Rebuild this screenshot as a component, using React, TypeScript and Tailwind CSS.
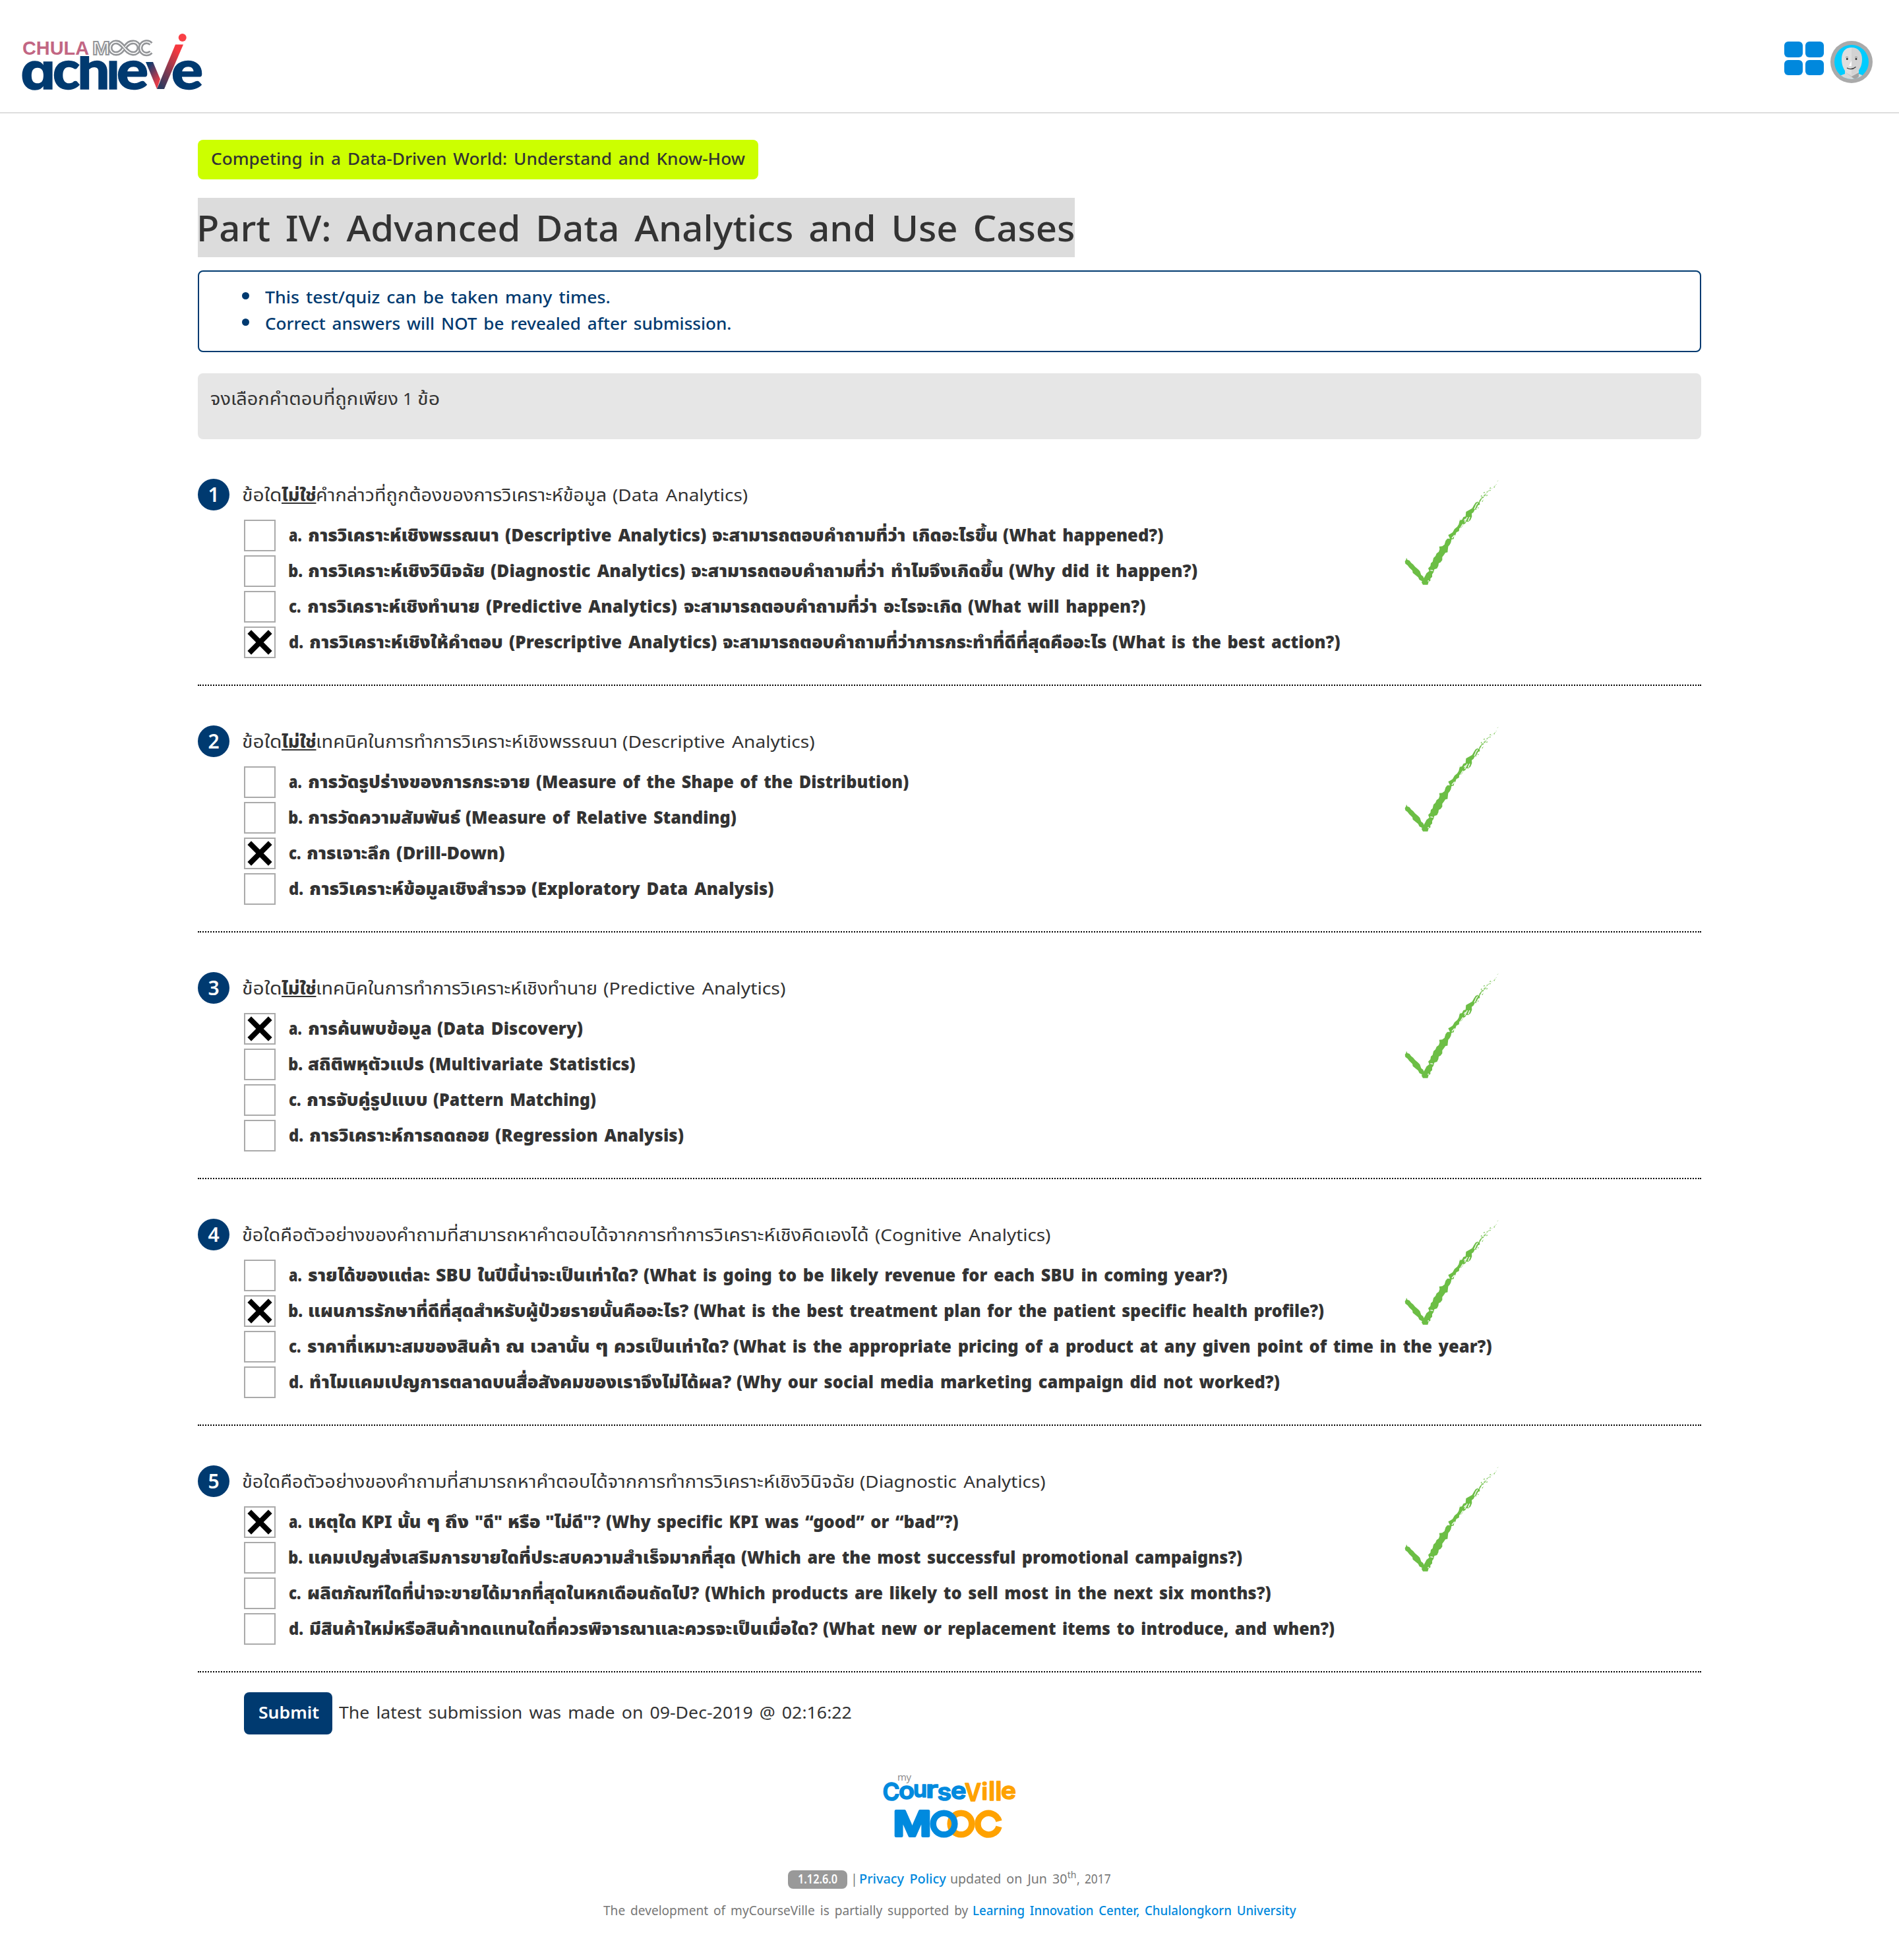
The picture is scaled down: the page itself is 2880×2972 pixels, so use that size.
import { useLayoutEffect, useRef } from "react";

type Run = [text: string, start: number, end: number, kind?: "u"];

type Question = {
  prompt: Run[];
  options: Run[][];
  chosen: number;
};

/** Inline text stretched horizontally to a fixed measure. */
function Fit({
  text,
  w,
  className = "",
  inner = "",
}: {
  text: string;
  w: number;
  className?: string;
  inner?: string;
}) {
  const ref = useRef<HTMLSpanElement>(null);
  useLayoutEffect(() => {
    const el = ref.current;
    if (!el) return;
    const natural = el.offsetWidth;
    if (natural > 0) el.style.transform = `scaleX(${w / natural})`;
  }, [text, w]);
  return (
    <span className={`block shrink-0 ${className}`} style={{ width: w }}>
      <span ref={ref} className={`inline-block origin-left whitespace-pre [word-spacing:3px] ${inner}`}>
        {text}
      </span>
    </span>
  );
}

function Line({ runs, from, className = "" }: { runs: Run[]; from: number; className?: string }) {
  return (
    <div className={`flex ${className}`}>
      {runs.map(([text, start, end, kind], i) => {
        const prev = i === 0 ? from : runs[i - 1][2];
        return (
          <span key={i} style={{ marginLeft: start - prev }}>
            <Fit
              text={text}
              w={end - start}
              className={kind === "u" ? "font-extrabold" : ""}
              inner={kind === "u" ? "underline decoration-2 underline-offset-2 [text-decoration-skip-ink:none]" : ""}
            />
          </span>
        );
      })}
    </div>
  );
}

const questions: Question[] = [
  {
    prompt: [
      ["ข้อใด", 367, 427],
      ["ไม่ใช่", 427, 479, "u"],
      ["คำกล่าวที่ถูกต้องของการวิเคราะห์ข้อมูล", 479, 920],
      ["(Data Analytics)", 929, 1134],
    ],
    options: [
      [["a.", 438, 458], ["การวิเคราะห์เชิงพรรณนา", 467, 757], ["(Descriptive Analytics)", 766, 1071], ["จะสามารถตอบคำถามที่ว่า", 1080, 1373], ["เกิดอะไรขึ้น", 1383, 1513], ["(What happened?)", 1521, 1764]],
      [["b.", 437, 459], ["การวิเคราะห์เชิงวินิจฉัย", 467, 735], ["(Diagnostic Analytics)", 744, 1039], ["จะสามารถตอบคำถามที่ว่า", 1048, 1341], ["ทำไมจึงเกิดขึ้น", 1351, 1522], ["(Why did it happen?)", 1530, 1816]],
      [["c.", 438, 457], ["การวิเคราะห์เชิงทำนาย", 466, 727], ["(Predictive Analytics)", 737, 1027], ["จะสามารถตอบคำถามที่ว่า", 1037, 1330], ["อะไรจะเกิด", 1340, 1459], ["(What will happen?)", 1468, 1737]],
      [["d.", 438, 460], ["การวิเคราะห์เชิงให้คำตอบ", 469, 763], ["(Prescriptive Analytics)", 772, 1087], ["จะสามารถตอบคำถามที่ว่าการกระทำที่ดีที่สุดคืออะไร", 1096, 1678], ["(What is the best action?)", 1687, 2033]],
    ],
    chosen: 3,
  },
  {
    prompt: [
      ["ข้อใด", 367, 427],
      ["ไม่ใช่", 427, 479, "u"],
      ["เทคนิคในการทำการวิเคราะห์เชิงพรรณนา", 479, 936],
      ["(Descriptive Analytics)", 944, 1236],
    ],
    options: [
      [["a.", 438, 458], ["การวัดรูปร่างของการกระจาย", 467, 804], ["(Measure of the Shape of the Distribution)", 813, 1378]],
      [["b.", 437, 459], ["การวัดความสัมพันธ์", 467, 698], ["(Measure of Relative Standing)", 706, 1117]],
      [["c.", 438, 457], ["การเจาะลึก", 465, 592], ["(Drill-Down)", 601, 766]],
      [["d.", 438, 460], ["การวิเคราะห์ข้อมูลเชิงสำรวจ", 469, 798], ["(Exploratory Data Analysis)", 806, 1174]],
    ],
    chosen: 2,
  },
  {
    prompt: [
      ["ข้อใด", 367, 427],
      ["ไม่ใช่", 427, 479, "u"],
      ["เทคนิคในการทำการวิเคราะห์เชิงทำนาย", 479, 906],
      ["(Predictive Analytics)", 915, 1191],
    ],
    options: [
      [["a.", 438, 458], ["การค้นพบข้อมูล", 467, 655], ["(Data Discovery)", 663, 884]],
      [["b.", 437, 459], ["สถิติพหุตัวแปร", 467, 643], ["(Multivariate Statistics)", 651, 964]],
      [["c.", 438, 457], ["การจับคู่รูปแบบ", 465, 649], ["(Pattern Matching)", 657, 904]],
      [["d.", 438, 460], ["การวิเคราะห์การถดถอย", 469, 742], ["(Regression Analysis)", 751, 1037]],
    ],
    chosen: 0,
  },
  {
    prompt: [
      ["ข้อใดคือตัวอย่างของคำถามที่สามารถหาคำตอบได้จากการทำการวิเคราะห์เชิงคิดเองได้", 367, 1318],
      ["(Cognitive Analytics)", 1327, 1594],
    ],
    options: [
      [["a.", 438, 458], ["รายได้ของแต่ละ", 467, 652], ["SBU", 661, 715], ["ในปีนี้น่าจะเป็นเท่าใด?", 724, 968], ["(What is going to be likely revenue for each SBU in coming year?)", 976, 1862]],
      [["b.", 437, 459], ["แผนการรักษาที่ดีที่สุดสำหรับผู้ป่วยรายนั้นคืออะไร?", 467, 1044], ["(What is the best treatment plan for the patient specific health profile?)", 1052, 2008]],
      [["c.", 438, 457], ["ราคาที่เหมาะสมของสินค้า", 466, 759], ["ณ", 767, 796], ["เวลานั้น", 804, 895], ["ๆ", 903, 922], ["ควรเป็นเท่าใด?", 931, 1105], ["(What is the appropriate pricing of a product at any given point of time in the year?)", 1112, 2263]],
      [["d.", 438, 460], ["ทำไมแคมเปญการตลาดบนสื่อสังคมของเราจึงไม่ได้ผล?", 469, 1109], ["(Why our social media marketing campaign did not worked?)", 1117, 1941]],
    ],
    chosen: 1,
  },
  {
    prompt: [
      ["ข้อใดคือตัวอย่างของคำถามที่สามารถหาคำตอบได้จากการทำการวิเคราะห์เชิงวินิจฉัย", 367, 1296],
      ["(Diagnostic Analytics)", 1304, 1586],
    ],
    options: [
      [["a.", 438, 458], ["เหตุใด", 467, 540], ["KPI", 548, 595], ["นั้น", 603, 639], ["ๆ", 647, 667], ["ถึง", 675, 711], ['"ดี"', 720, 762], ["หรือ", 770, 819], ['"ไม่ดี"?', 827, 911], ["(Why specific KPI was “good” or “bad”?)", 919, 1454]],
      [["b.", 437, 459], ["แคมเปญส่งเสริมการขายใดที่ประสบความสำเร็จมากที่สุด", 467, 1116], ["(Which are the most successful promotional campaigns?)", 1124, 1884]],
      [["c.", 438, 457], ["ผลิตภัณฑ์ใดที่น่าจะขายได้มากที่สุดในหกเดือนถัดไป?", 466, 1061], ["(Which products are likely to sell most in the next six months?)", 1069, 1928]],
      [["d.", 438, 460], ["มีสินค้าใหม่หรือสินค้าทดแทนใดที่ควรพิจารณาและควรจะเป็นเมื่อใด?", 469, 1240], ["(What new or replacement items to introduce, and when?)", 1248, 2024]],
    ],
    chosen: 0,
  },
];

function AchieveLogo() {
  return (
    <svg className="block h-[100px] w-[280px]" viewBox="30 45 280 100" fontFamily="Lato, sans-serif">
      <defs>
        <linearGradient id="down" x1="0" y1="0" x2="0.6" y2="1">
          <stop offset="0.1" stopColor="#003a70" />
          <stop offset="0.9" stopColor="#e23b48" />
        </linearGradient>
        <linearGradient id="up" x1="0.9" y1="0" x2="0.2" y2="1">
          <stop offset="0.15" stopColor="#f5383f" />
          <stop offset="1" stopColor="#2b3a5e" />
        </linearGradient>
        <clipPath id="ascender">
          <rect x="118" y="85" width="50" height="60" />
        </clipPath>
      </defs>
      <text x="34" y="83" fontSize="30" fontWeight="700" fontFamily="Liberation Sans, sans-serif" fill="#c26683" textLength="101" lengthAdjust="spacingAndGlyphs">CHULA</text>
      <text x="140" y="83" fontSize="30" fontWeight="700" fontFamily="Liberation Sans, sans-serif" fill="#ffffff" stroke="#939598" strokeWidth="1.800" textLength="27" lengthAdjust="spacingAndGlyphs">M</text>
      <g fill="none">
        <path d="M187 74 C183 80 180 81 177 81 A8.600 8.600 0 1 1 177 64 C186 64 191 81 201 81 A8.600 8.600 0 1 0 201 64 C196 64 193 67 190 71" stroke="#939598" strokeWidth="6.800" />
        <path d="M187 74 C183 80 180 81 177 81 A8.600 8.600 0 1 1 177 64 C186 64 191 81 201 81 A8.600 8.600 0 1 0 201 64 C196 64 193 67 190 71" stroke="#ffffff" strokeWidth="1.600" />
        <path d="M229 66.500 A9.200 9.200 0 1 0 229 79" stroke="#939598" strokeWidth="6.800" />
        <path d="M229 66.500 A9.200 9.200 0 1 0 229 79" stroke="#ffffff" strokeWidth="1.600" />
      </g>
      <g fill="#003a70" stroke="#003a70" strokeWidth="1.500" fontSize="81" fontWeight="900">
        <text x="31" y="135" fontSize="76" fontWeight="700" fontFamily="Inter, sans-serif" textLength="53" lengthAdjust="spacingAndGlyphs" className="[font-feature-settings:'cv11']">a</text>
        <text x="80" y="135" textLength="41" lengthAdjust="spacingAndGlyphs">c</text>
        <g clipPath="url(#ascender)">
          <text x="117.500" y="135" textLength="49" lengthAdjust="spacingAndGlyphs">h</text>
        </g>
        <text x="161.500" y="135" fontSize="81" textLength="20" lengthAdjust="spacingAndGlyphs">ı</text>
        <text x="177" y="135" textLength="48" lengthAdjust="spacingAndGlyphs">e</text>
        <text x="260" y="135" textLength="48" lengthAdjust="spacingAndGlyphs">e</text>
      </g>
      <path d="M221 94h11l11 26-5 15z" fill="url(#down)" />
      <path d="M266 67.500h12L249 135h-11z" fill="url(#up)" />
      <circle cx="276.700" cy="57" r="6" fill="#f94046" />
    </svg>
  );
}

function Avatar() {
  return (
    <svg className="block size-16" viewBox="0 0 64 64">
      <defs>
        <clipPath id="face-clip">
          <circle cx="32" cy="32" r="26" />
        </clipPath>
      </defs>
      <circle cx="32" cy="32" r="32" fill="#aaaaaa" />
      <g clipPath="url(#face-clip)">
        <rect width="64" height="64" fill="#00ccff" />
        <path d="M14 58V53l8-3V42H43v8l8 3v5z" fill="#d8d8d8" />
        <path d="M22 47l10 7 11-6v6l-5 5z" fill="#a3a3a3" />
        <path d="M32 10C22 10 17 17 17 28C17 40 23 51 32 51z" fill="#dedede" />
        <path d="M32 10C42 10 48 17 48 28C48 40 41 51 32 51z" fill="#d3d3d3" />
      </g>
      <path d="M32 30v8h-4z" fill="#fff" />
      <path d="M23 25q2-1.500 4 0M37 25q2-1.500 4 0" fill="none" stroke="#888" strokeWidth="1" />
      <circle cx="25.300" cy="27.500" r="1.400" fill="#222" />
      <circle cx="39" cy="27.500" r="1.400" fill="#222" />
      <path d="M25 41q7 4 13.500-1.500" fill="none" stroke="#333" strokeWidth="1.300" />
    </svg>
  );
}

function BrushCheck() {
  return (
    <svg className="block h-[160px] w-[144px]" viewBox="90 24 432 480" fill="none">
      <path
        fill="#6cbe45"
        d="M99 377L103 386 113 390 120 400 130 408 138 418 152 430 160 438 166 455 175 462 178 470 184 460 190 448 203 437 198 425 208 415 210 402 218 395 222 378 231 370 236 358 246 350 250 338 248 326 262 325 272 317 277 300 285 290 297 290 289 274 300 268 309 262 318 246 330 236 337 225 341 208 352 204 358 192 368 189 370 168 385 160 398 152 406 138 414 126 428 120 436 110 440 112 432 126 433 136 425 138 418 152 410 158 404 170 396 176 397 190 390 206 380 214 372 212 366 222 358 226 350 240 340 242 338 256 326 262 322 274 316 280 314 292 304 294 301 308 296 318 289 326 286 352 276 355 270 364 262 374 262 388 254 398 246 402 244 414 238 426 226 430 222 444 216 452 216 464 208 472 208 482 200 486 196 500 174 500 168 490 170 484 158 478 152 466 140 456 128 446 126 436 112 422 104 412 94 404 92 394 97 386z"
      />
      <path
        stroke="#ffffff"
        strokeWidth="4"
        d="M376 192l-12 24M387 192l-7 18M368 200l-7 8M356 224l-10 16M415 140l-7 16M423 128l-9 12M318 274l-12 14M196 484l5-3M208 434l12 2M430 118l-5 7"
      />
      <path
        stroke="#6cbe45"
        strokeWidth="4"
        strokeDasharray="6 3"
        opacity=".85"
        d="M437 112l8-13M447 105l9-17M456 94l6-9M443 122l6-8M464 80l9-8M463 96l6-6M450 82l6-3M478 62l5-3M477 73l6-6M497 58l6-9M438 98l4-4M440 106l10-3M424 152l3-4M412 158l8-2M452 96l8-3"
      />
      <path stroke="#6cbe45" strokeWidth="3" opacity=".5" d="M512 30l4-4M506 45l3-3M486 64l3-3M345 206l-4-4M282 354l4-4" />
    </svg>
  );
}

function CheckBox({ on }: { on: boolean }) {
  return (
    <span className="flex size-12 shrink-0 items-center justify-center border-2 border-[#aaaaaa] bg-white">
      {on && (
        <svg className="size-[38px]" viewBox="0 0 38 38" stroke="#000" strokeWidth="8">
          <path d="M3.200 3.200l31.600 31.600M34.800 3.200l-31.600 31.600" />
        </svg>
      )}
    </span>
  );
}

function CourseVilleLogo() {
  return (
    <svg className="block h-[104px] w-[212px] overflow-visible" viewBox="1334 2688 212 104" fontFamily="Inter, sans-serif">
      <text x="1361" y="2700" fontSize="15" fontFamily="Open Sans, sans-serif" fill="#888" textLength="21">my</text>
      <g fontWeight="600" strokeLinejoin="round" strokeWidth="1.600">
        <g fill="#008ade" stroke="#008ade">
          <text x="1338.500" y="2730" fontSize="37" textLength="26" lengthAdjust="spacingAndGlyphs">C</text>
          <text x="1363" y="2728" fontSize="37" textLength="24" lengthAdjust="spacingAndGlyphs">o</text>
          <text x="1385" y="2725" fontSize="35" textLength="21" lengthAdjust="spacingAndGlyphs">u</text>
          <text x="1404" y="2726" fontSize="37" textLength="19" lengthAdjust="spacingAndGlyphs">r</text>
          <text x="1421.500" y="2729.500" fontSize="37" textLength="21.500" lengthAdjust="spacingAndGlyphs">s</text>
          <text x="1442" y="2728" fontSize="37" textLength="23.500" lengthAdjust="spacingAndGlyphs">e</text>
        </g>
        <g fill="#ffa200" stroke="#ffa200">
          <text x="1463" y="2730.500" fontSize="37" textLength="25" lengthAdjust="spacingAndGlyphs">V</text>
          <text x="1488.500" y="2729" fontSize="35" textLength="9.500" lengthAdjust="spacingAndGlyphs">i</text>
          <text x="1499" y="2730" fontSize="40" textLength="20.500" lengthAdjust="spacingAndGlyphs">ll</text>
          <text x="1518" y="2728" fontSize="37" textLength="23" lengthAdjust="spacingAndGlyphs">e</text>
        </g>
      </g>
      <text x="1354.500" y="2784" fontSize="52" fontWeight="600" fill="#008ade" stroke="#008ade" strokeWidth="4" strokeLinejoin="round" textLength="58" lengthAdjust="spacingAndGlyphs">M</text>
      <g fill="none" strokeWidth="9.500">
        <circle cx="1457.500" cy="2765.500" r="16.300" stroke="#ffa200" />
        <circle cx="1431.500" cy="2765.500" r="16.300" stroke="#008ade" />
        <path d="M1515 2761.500A16.300 16.300 0 1 0 1515 2769.800" stroke="#ffa200" />
      </g>
    </svg>
  );
}

export default function App() {
  return (
    <div className="min-h-[2972px] w-[2880px] bg-white font-['Noto_Sans','Noto_Sans_Thai',sans-serif] text-[26px] text-[#333333]">
      <header className="flex h-[172px] items-start justify-between border-b-2 border-[#dddddd] pt-[45px] pr-10 pl-[30px]">
        <AchieveLogo />
        <div className="flex gap-[10px] pt-[17px]">
          <div className="mt-[1px] grid h-[51px] w-[60px] grid-cols-2 gap-1">
            <span className="rounded-[6px] bg-[#0088dd]" />
            <span className="rounded-[6px] bg-[#0088dd]" />
            <span className="rounded-[6px] bg-[#0088dd]" />
            <span className="rounded-[6px] bg-[#0088dd]" />
          </div>
          <Avatar />
        </div>
      </header>

      <main className="ml-[300px] w-[2280px] pt-10">
        <div className="h-[60px] w-[850px] rounded-lg bg-[#ccff00] pl-5 font-medium leading-[56px]">
          <Fit text="Competing in a Data-Driven World: Understand and Know-How" w={810} />
        </div>
        <h1 className="mt-7 h-[90px] w-[1330px] bg-[#dcdcdc] text-[55px] font-medium leading-[90px]">
          <Fit text="Part IV: Advanced Data Analytics and Use Cases" w={1332} className="-ml-[2px]" inner="[word-spacing:8px]" />
        </h1>
        <ul className="mt-5 h-[124px] rounded-lg border-2 border-[#003a70] pt-[18px] pl-[65px] font-medium leading-10 text-[#003a70]">
          <li className="flex gap-6">
            <span className="mt-[13px] size-[11px] rounded-full bg-[#003a70]" />
            <Fit text="This test/quiz can be taken many times." w={524} />
          </li>
          <li className="flex gap-6">
            <span className="mt-[13px] size-[11px] rounded-full bg-[#003a70]" />
            <Fit text="Correct answers will NOT be revealed after submission." w={707} />
          </li>
        </ul>
        <div className="mt-8 h-[100px] rounded-lg bg-[#e6e6e6] pt-[18px] leading-10">
          <Line from={300} runs={[["จงเลือกคำตอบที่ถูกเพียง", 319, 604], ["1", 611, 626], ["ข้อ", 633, 667]]} />
        </div>

        <div className="pt-[28px]">
          {questions.map((q, qi) => (
            <section key={qi} className="relative h-[374px] pt-8">
              <div className="flex leading-[48px]">
                <span className="flex size-12 items-center justify-center rounded-full bg-[#003a70] text-[30px] font-semibold text-white">
                  {qi + 1}
                </span>
                <Line from={348} runs={q.prompt} />
              </div>
              <div className="mt-[14px] ml-[70px] flex flex-col gap-[6px] font-black">
                {q.options.map((runs, oi) => (
                  <div key={oi} className="flex h-12 leading-[46px]">
                    <CheckBox on={oi === q.chosen} />
                    <Line from={418} runs={runs} />
                  </div>
                ))}
              </div>
              <div className="mt-[40px] border-b-2 border-dotted border-black" />
              <div className="absolute top-[34px] left-[1830px]">
                <BrushCheck />
              </div>
            </section>
          ))}
        </div>

        <div className="mt-[2px] ml-[70px] flex gap-[10px] leading-[60px]">
          <button className="flex h-16 w-[134px] rounded-lg bg-[#003a70] pl-[21px] font-semibold text-white">
            <Fit text="Submit" w={92} />
          </button>
          <Fit text="The latest submission was made on 09-Dec-2019 @ 02:16:22" w={778} />
        </div>
      </main>

      <footer className="flex flex-col items-center pt-[58px] text-[19px] text-[#777777]">
        <CourseVilleLogo />
        <div className="mt-11 flex h-7 leading-[26px]">
          <span className="h-7 w-[90px] rounded-lg bg-[#999999] pl-[15px] font-semibold text-white">
            <Fit text="1.12.6.0" w={60} />
          </span>
          <span className="ml-[5px]">|</span>
          <Fit text="Privacy Policy" w={132} className="ml-[2px] font-medium text-[#0088dd]" />
          <Fit text="updated on Jun 30" w={178} className="ml-[6px]" />
          <Fit text="th" w={14} className="-mt-[6px] text-[14px]" />
          <Fit text=", 2017" w={52} />
        </div>
        <div className="mt-5 flex leading-[26px]">
          <Fit text="The development of myCourseVille is partially supported by" w={553} />
          <Fit
            text="Learning Innovation Center, Chulalongkorn University"
            w={491}
            className="ml-[7px] font-medium text-[#0088dd]"
          />
        </div>
      </footer>
    </div>
  );
}
